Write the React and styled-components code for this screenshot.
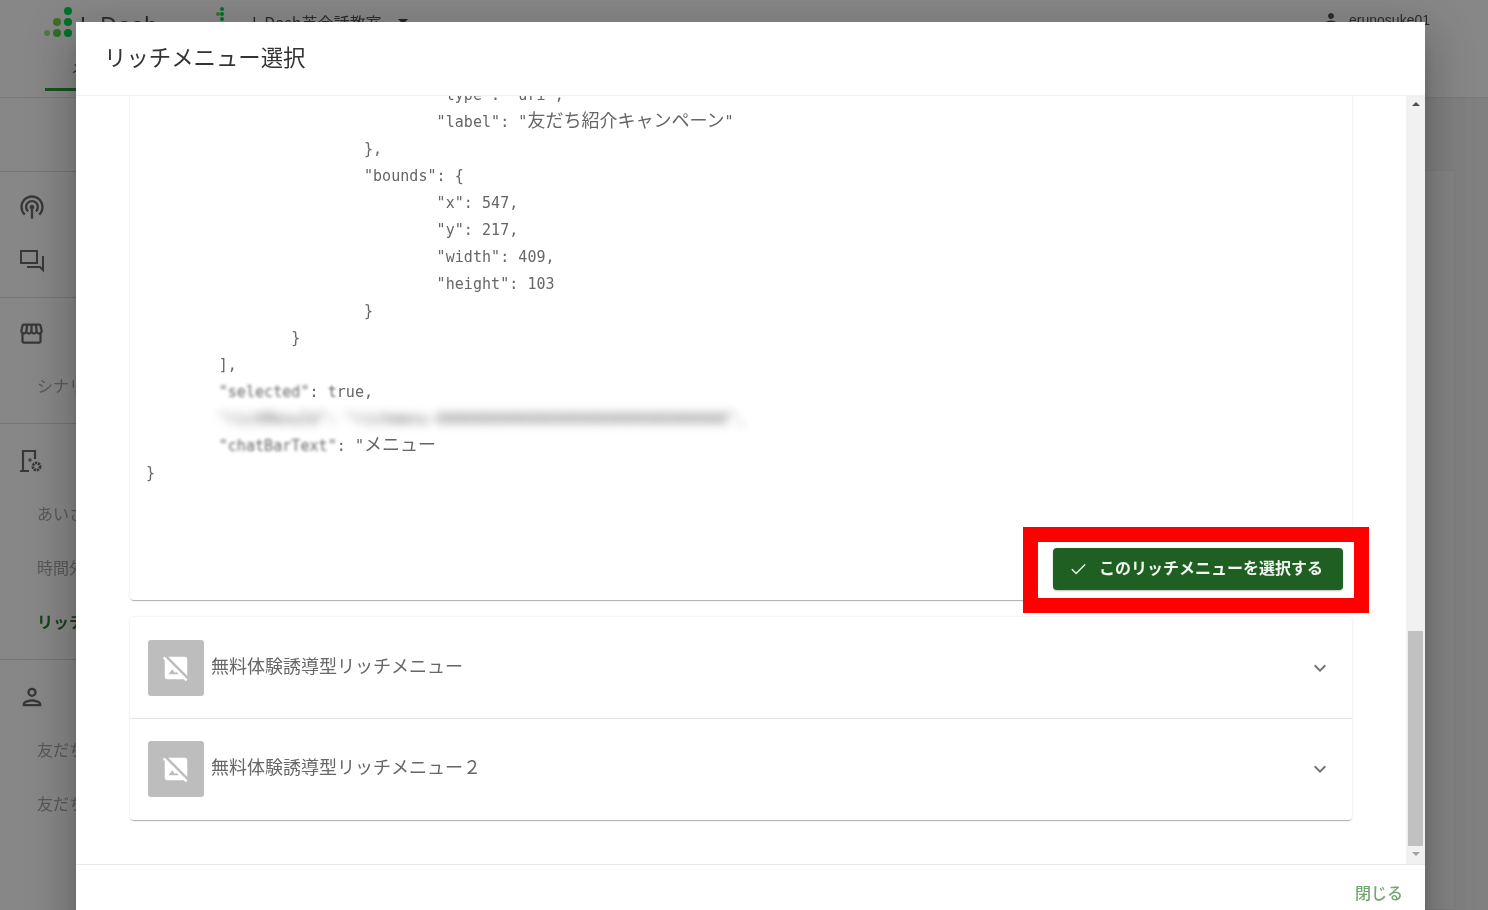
import React from "react";
import styled, { createGlobalStyle } from "styled-components";
import { Check } from "lucide-react";
import {
  MdExpandMore,
  MdHideImage,
  MdOutlinePerson,
  MdOutlineStorefront,
  MdPerson,
  MdPodcasts,
} from "react-icons/md";

const JP = `"Noto Sans CJK JP", "Noto Sans", sans-serif`;

const GlobalStyle = createGlobalStyle`
  html, body {
    margin: 0;
    height: 100%;
    overflow: hidden;
    background: #fff;
  }
  * {
    box-sizing: border-box;
  }
`;

function Logo() {
  const dots = [
    [25, 5, 4, "#00d84e"],
    [14, 16, 4, "#7ed04a"],
    [25, 16, 4, "#00d84e"],
    [4, 27, 3, "#9fe08a"],
    [14, 27, 4, "#5fd050"],
    [25, 27, 4, "#00d84e"],
  ];
  return (
    <svg width="30" height="32" viewBox="0 0 30 32">
      {dots.map(([cx, cy, r, fill]) => (
        <circle key={`${cx}-${cy}`} cx={cx} cy={cy} r={r} fill={fill} />
      ))}
    </svg>
  );
}

function SmallLogo() {
  return (
    <svg width="12" height="16" viewBox="0 0 12 16">
      <circle cx="8" cy="3" r="2" fill="#00d84e" />
      <circle cx="4" cy="8" r="2" fill="#7ed04a" />
      <circle cx="8" cy="8" r="2" fill="#00d84e" />
      <circle cx="8" cy="13" r="2" fill="#00d84e" />
    </svg>
  );
}

function ChatIcon() {
  return (
    <svg width="28" height="28" viewBox="0 0 28 28" fill="none" stroke="currentColor" strokeWidth="2">
      <path d="M3 4h16v12H3z" />
      <path d="M9 20h13l3 3V9" />
    </svg>
  );
}

function PageGearIcon() {
  return (
    <svg width="26" height="26" viewBox="0 0 26 26" fill="none" stroke="currentColor" strokeWidth="2.2">
      <path d="M2 23h9M5 23V3h12v8" />
      <circle cx="18.5" cy="18.5" r="3.6" strokeWidth="2.8" strokeDasharray="2.2 0.8" />
      <circle cx="12" cy="12" r="0.6" />
    </svg>
  );
}

const blocks = [
  {
    rows: [{ icon: <MdPodcasts size={28} /> }, { icon: <ChatIcon /> }],
  },
  {
    rows: [{ icon: <MdOutlineStorefront size={27} /> }, { label: "シナリオ配信" }],
  },
  {
    top: 10,
    bottom: 9,
    rows: [
      { icon: <PageGearIcon /> },
      { label: "あいさつ設定" },
      { label: "時間外応答" },
      { label: "リッチメニュー", active: true },
    ],
  },
  {
    top: 10,
    bottom: 9,
    rows: [
      { icon: <MdOutlinePerson size={28} /> },
      { label: "友だち一覧" },
      { label: "友だち追加" },
    ],
  },
];

const jsonHead = `\t\t\t\t"type": "uri",\n\t\t\t\t"label": "`;
const jsonTail = `"
\t\t\t},
\t\t\t"bounds": {
\t\t\t\t"x": 547,
\t\t\t\t"y": 217,
\t\t\t\t"width": 409,
\t\t\t\t"height": 103
\t\t\t}
\t\t}
\t],
\t`;

export default function App() {
  return (
    <Root>
      <GlobalStyle />
      <Page>
        <TopBar>
          <TopRow>
            <Logo />
            <Brand>L Dash</Brand>
            <SmallLogo />
            <Account>L Dash英会話教室</Account>
            <Caret />
            <UserBlock>
              <MdPerson size={18} />
              <span>erunosuke01</span>
            </UserBlock>
          </TopRow>
          <TabRow>
            <Tab>メニュー</Tab>
          </TabRow>
        </TopBar>
        <Body>
          <Sidebar>
            {blocks.map((block, i) => (
              <SideGroup key={i} $top={block.top} $bottom={block.bottom}>
                {block.rows.map((row, j) => (
                  <SideRow key={j} $active={row.active} $text={!row.icon}>
                    {row.icon || row.label}
                  </SideRow>
                ))}
              </SideGroup>
            ))}
          </Sidebar>
          <Main>
            <Panel />
          </Main>
        </Body>
      </Page>

      <Overlay>
        <Dialog>
          <DialogTitle>リッチメニュー選択</DialogTitle>
          <DialogBody>
            <ScrollArea>
              <OpenCard>
                <Json>
                  {jsonHead}
                  <Jp>友だち紹介キャンペーン</Jp>
                  {jsonTail}
                  <Masked $amount={1.8}>"selected"</Masked>
                  {": "}
                  <Masked $amount={0.8}>t</Masked>
                  {"rue,\n\t"}
                  <Masked $amount={5}>"richMenuId": "richmenu-00000000000000000000000000000000",</Masked>
                  {"\n\t"}
                  <Masked $amount={1.8}>"chatBarText"</Masked>
                  {": \""}
                  <Jp>メニュー</Jp>
                  {"\n}"}
                </Json>
                <ActionRow>
                  <SelectWrap>
                    <Highlight />
                    <SelectButton>
                      <Check size={19} strokeWidth={1.6} />
                      <ButtonLabel>このリッチメニューを選択する</ButtonLabel>
                    </SelectButton>
                  </SelectWrap>
                </ActionRow>
              </OpenCard>
              <ClosedCard>
                <MenuRow>
                  <Thumb>
                    <MdHideImage size={30} />
                  </Thumb>
                  <MenuName>無料体験誘導型リッチメニュー</MenuName>
                  <MdExpandMore size={24} color="#757575" />
                </MenuRow>
                <MenuRow>
                  <Thumb>
                    <MdHideImage size={30} />
                  </Thumb>
                  <MenuName>無料体験誘導型リッチメニュー２</MenuName>
                  <MdExpandMore size={24} color="#757575" />
                </MenuRow>
              </ClosedCard>
            </ScrollArea>
            <ScrollTrack>
              <ArrowUp />
              <ScrollThumb />
              <ArrowDown />
            </ScrollTrack>
          </DialogBody>
          <DialogFooter>
            <CloseLink>閉じる</CloseLink>
          </DialogFooter>
        </Dialog>
      </Overlay>
    </Root>
  );
}

const Root = styled.div`
  width: 1488px;
  height: 910px;
  overflow: hidden;
  position: relative;
  filter: blur(0.6px);
  font-family: ${JP};
`;

const Page = styled.div`
  height: 100%;
  display: flex;
  flex-direction: column;
  background: #fff;
`;

const TopBar = styled.header`
  height: 98px;
  flex: none;
  padding-left: 43px;
  border-bottom: 1px solid #e6e6e6;
`;

const TopRow = styled.div`
  height: 44px;
  padding-top: 6px;
  display: flex;
  align-items: flex-start;
  color: #555;
`;

const Brand = styled.div`
  width: 141px;
  padding: 7px 0 0 7px;
  font-family: "Liberation Sans", sans-serif;
  font-size: 23px;
  letter-spacing: 1px;
  line-height: 26px;
`;

const Account = styled.div`
  width: 146px;
  margin: 2px 0 0 26px;
  font-size: 16px;
  line-height: 28px;
`;

const Caret = styled.span`
  margin-top: 13px;
  border: 5px solid transparent;
  border-top-color: #444;
`;

const UserBlock = styled.div`
  margin-left: auto;
  margin-right: 58px;
  display: flex;
  gap: 9px;
  font-family: "Liberation Sans", sans-serif;
  font-size: 14px;
  line-height: 28px;
  color: #555;
  svg {
    margin-top: 4px;
  }
`;

const TabRow = styled.div`
  height: 48px;
  padding-left: 2px;
  display: flex;
`;

const Tab = styled.div`
  width: 130px;
  padding: 12px 0 0 26px;
  border-bottom: 3px solid #2e9e3c;
  height: 47px;
  font-size: 14px;
  color: #2e7d32;
`;

const Body = styled.div`
  flex: 1;
  display: flex;
`;

const Sidebar = styled.nav`
  width: 240px;
  padding-top: 73px;
  flex: none;
`;

const SideGroup = styled.div`
  padding: ${(p) => p.$top ?? 8}px 0 ${(p) => p.$bottom ?? 9}px 18px;
  border-top: 1px solid #dcdcdc;
`;

const SideRow = styled.div`
  height: 54px;
  display: flex;
  align-items: center;
  padding-left: 19px;
  padding-bottom: ${(p) => (p.$text ? "5px" : "0")};
  font-size: 16px;
  font-weight: ${(p) => (p.$active ? 700 : 400)};
  color: ${(p) => (p.$active ? "#2e7d32" : "#a8a8a8")};
  & > svg {
    margin-left: -19px;
    color: #6a6a6a;
  }
`;

const Main = styled.main`
  flex: 1;
  padding: 72px 33px 0 0;
  background: #f2f2f2;
`;

const Panel = styled.div`
  height: 100%;
  background: #fafafa;
  border: 1px solid #ececec;
`;

const Overlay = styled.div`
  position: absolute;
  inset: 0;
  padding: 22px 0 0 76px;
  overflow: hidden;
  background: rgba(0, 0, 0, 0.47);
`;

const Dialog = styled.section`
  width: 1349px;
  height: 940px;
  display: flex;
  flex-direction: column;
  background: #fff;
  box-shadow: 0 11px 15px -7px rgba(0, 0, 0, 0.2), 0 24px 38px 3px rgba(0, 0, 0, 0.14),
    0 9px 46px 8px rgba(0, 0, 0, 0.12);
`;

const DialogTitle = styled.h2`
  height: 74px;
  flex: none;
  margin: 0;
  padding: 0 0 6px 28px;
  display: flex;
  align-items: center;
  border-bottom: 1px solid #f0f0f0;
  font-size: 22.4px;
  font-weight: 400;
  color: #333;
`;

const DialogBody = styled.div`
  height: 768px;
  flex: none;
  display: flex;
`;

const ScrollArea = styled.div`
  flex: 1;
  min-width: 0;
  padding: 0 54px 44px;
  overflow: hidden;
  display: flex;
  flex-direction: column;
  justify-content: flex-end;
  gap: 17px;
`;

const Card = styled.div`
  flex: none;
  background: #fff;
  border-radius: 4px;
  box-shadow: 0 2px 1px -1px rgba(0, 0, 0, 0.2), 0 1px 1px 0 rgba(0, 0, 0, 0.1),
    0 0 3px 0 rgba(0, 0, 0, 0.1);
`;

const OpenCard = styled(Card)`
  padding: 0 9px 10px 16px;
`;

const Json = styled.pre`
  margin: 0;
  tab-size: 8;
  font-family: "DejaVu Sans Mono", ${JP};
  font-size: 15px;
  letter-spacing: 0.05px;
  line-height: 27px;
  color: #666;
`;

const Jp = styled.span`
  font-family: ${JP};
  font-size: 18px;
  line-height: 1;
  letter-spacing: 0;
`;

const Masked = styled.span`
  display: inline-block;
  filter: blur(${(p) => p.$amount}px);
`;

const ActionRow = styled.div`
  margin-top: 61px;
  display: flex;
  justify-content: flex-end;
`;

const SelectWrap = styled.div`
  position: relative;
`;

const Highlight = styled.div`
  position: absolute;
  inset: -21px -26px -23px -30px;
  background: #fff;
  border: 15px solid #f00;
`;

const SelectButton = styled.button`
  position: relative;
  width: 290px;
  height: 42px;
  padding: 0 0 0 16px;
  display: flex;
  align-items: center;
  gap: 11px;
  border: none;
  border-radius: 4px;
  background: #1f5f22;
  box-shadow: 0 1px 2px rgba(0, 0, 0, 0.25);
  color: #f2f5f2;
  font-family: ${JP};
  font-size: 16px;
  font-weight: 700;
`;

const ButtonLabel = styled.span`
  padding-bottom: 4px;
`;

const ClosedCard = styled(Card)``;

const MenuRow = styled.div`
  height: 101px;
  padding: 0 20px 0 18px;
  display: flex;
  align-items: center;
  gap: 7px;
  & + & {
    height: 102px;
    padding-bottom: 1px;
    border-top: 1px solid #e4e4e4;
  }
`;

const Thumb = styled.div`
  width: 56px;
  height: 56px;
  flex: none;
  display: flex;
  align-items: center;
  justify-content: center;
  border-radius: 3px;
  background: #bdbdbd;
  color: #fff;
`;

const MenuName = styled.div`
  flex: 1;
  padding-bottom: 6px;
  font-size: 18px;
  color: #666;
`;

const ScrollTrack = styled.div`
  width: 19px;
  flex: none;
  padding: 0 2px;
  display: flex;
  flex-direction: column;
  align-items: center;
  background: #f1f1f1;
`;

const ArrowUp = styled.span`
  margin-top: 6px;
  border: 4px solid transparent;
  border-top: none;
  border-bottom: 4px solid #505050;
`;

const ScrollThumb = styled.div`
  width: 15px;
  height: 215px;
  margin-top: 525px;
  background: #c1c1c1;
`;

const ArrowDown = styled.span`
  margin-top: 6px;
  border: 4px solid transparent;
  border-bottom: none;
  border-top: 4px solid #a3a3a3;
`;

const DialogFooter = styled.footer`
  flex: 1;
  padding: 15px 22px 0 0;
  display: flex;
  justify-content: flex-end;
  align-items: flex-start;
  border-top: 1px solid #e8e8e8;
`;

const CloseLink = styled.button`
  padding: 0;
  border: none;
  background: none;
  font-family: ${JP};
  font-size: 16px;
  font-weight: 500;
  color: #6fa871;
`;
